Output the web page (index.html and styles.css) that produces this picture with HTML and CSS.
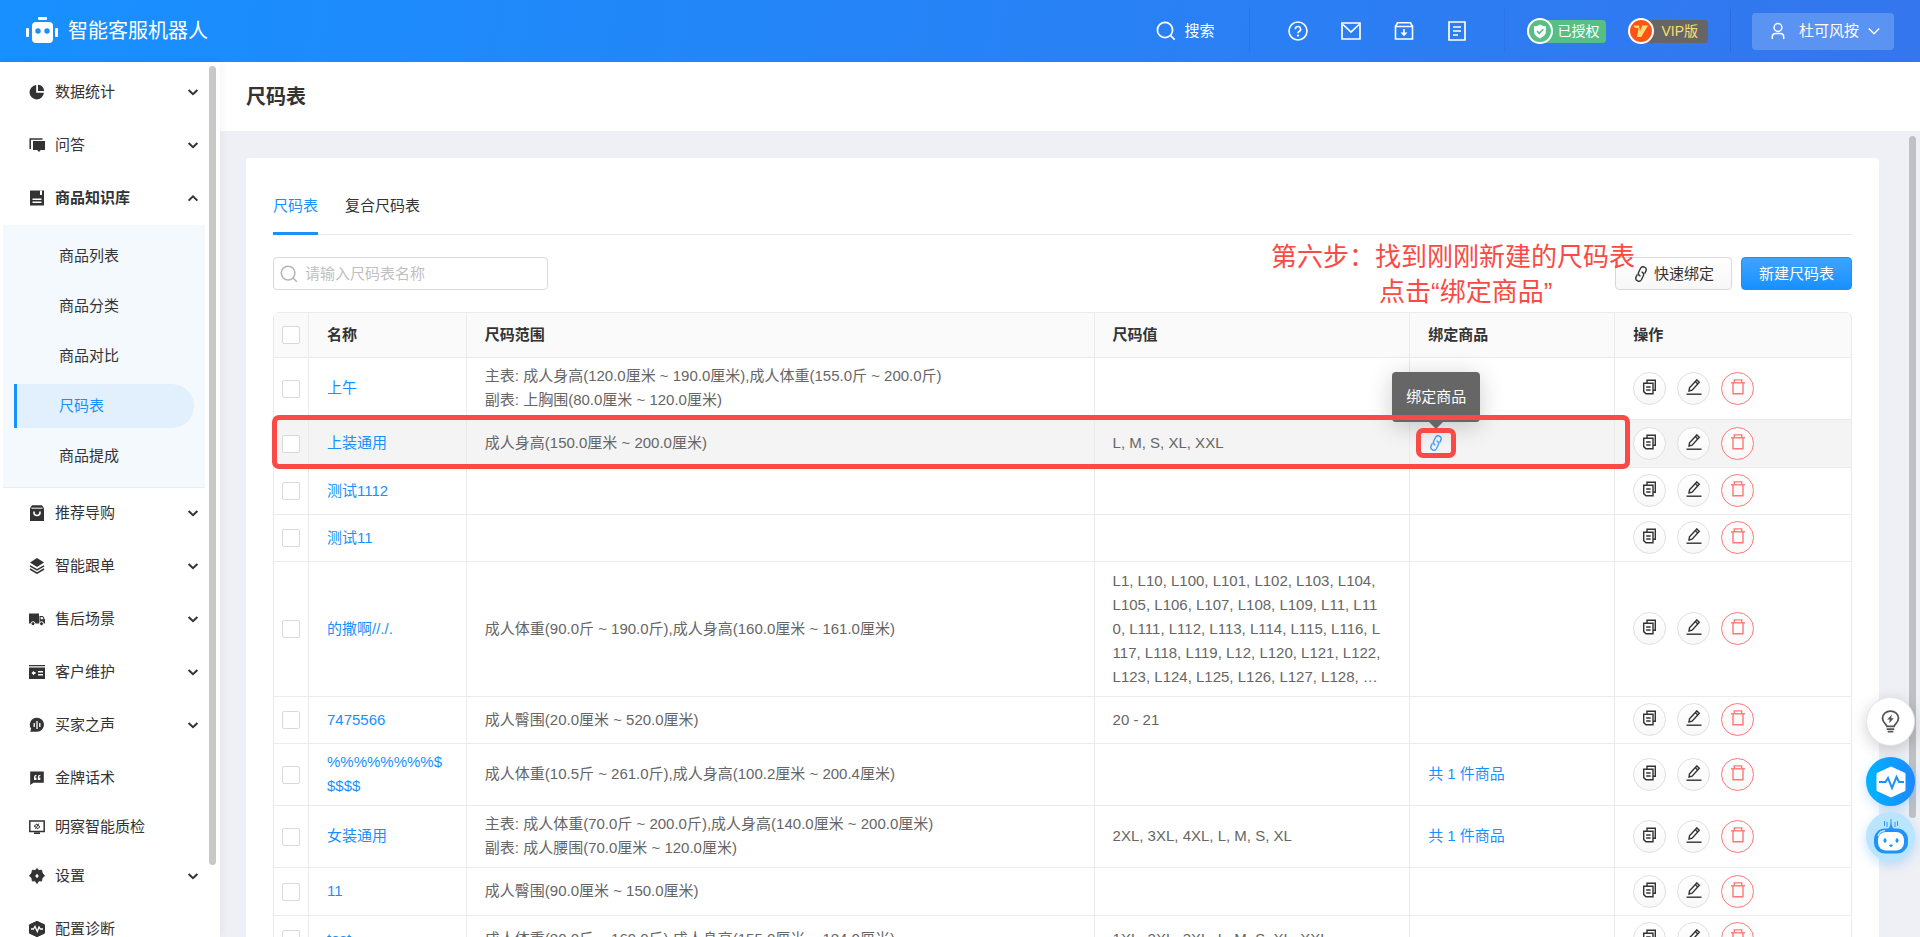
FILE: index.html
```html
<!DOCTYPE html>
<html lang="zh-CN">
<head>
<meta charset="utf-8">
<meta name="viewport" content="width=device-width, initial-scale=1">
<title>尺码表 - 智能客服机器人</title>
<link rel="stylesheet" href="styles.css">
</head>
<body>
<svg class="sprite" aria-hidden="true">
  <symbol id="i-down" viewBox="0 0 12 12"><path d="M1.6 4 6 8.2 10.4 4" fill="none" stroke="currentColor" stroke-width="2"/></symbol>
  <symbol id="i-up" viewBox="0 0 12 12"><path d="M1.6 8.6 6 4.400l4.400 4.200" fill="none" stroke="currentColor" stroke-width="2"/></symbol>
  <symbol id="i-search" viewBox="0 0 20 20"><g fill="none" stroke="currentColor" stroke-width="1.700"><circle cx="9" cy="9" r="7.600"/><path d="m14.500 14.500 4.200 4.200"/></g></symbol>
  <symbol id="i-link" viewBox="0 0 16 16"><g transform="rotate(-12 8 8)" fill="none" stroke="currentColor" stroke-width="1.400" stroke-linecap="round"><path d="M6.600 9.700a3 3 0 0 1-.4-4.100l2.600-3.300a3 3 0 0 1 4.700 3.700l-1.500 2"/><path d="M9.400 6.300a3 3 0 0 1 .4 4.100l-2.600 3.300a3 3 0 0 1-4.700-3.700l1.500-2"/></g></symbol>
  <symbol id="i-copy" viewBox="0 0 16 16"><g fill="none" stroke="currentColor" stroke-width="1.400"><path d="M5 4V1.200h8.300v10H11"/><path d="M1.700 4.200H11v10.600H4L1.700 12.600z"/><path d="M4.200 8h4.400M4.200 11h4.400"/></g></symbol>
  <symbol id="i-edit" viewBox="0 0 16 16"><g fill="none" stroke="currentColor" stroke-width="1.400"><path d="m3 12 .5-3.200L10.800.900l2.500 2.300-7.200 8z"/><path d="m9.300 2.600 2.500 2.300"/><path d="M.5 15.200h15"/></g></symbol>
  <symbol id="i-trash" viewBox="0 0 16 16"><g fill="none" stroke="currentColor" stroke-width="1.400"><path d="M1 3.800h14"/><path d="M4.300 3.800V.900h7.400v2.900"/><path d="M3 3.800v11h10v-11"/></g></symbol>
</svg>

<header class="topbar">
  <a class="brand" href="#">
    <svg class="brand-logo" viewBox="0 0 32 28" aria-hidden="true">
      <g fill="#fff"><rect x="12" y="0" width="9" height="3" rx="1"/><rect x="6" y="5" width="21" height="21" rx="4"/><rect x="0" y="11" width="3" height="9" rx="1"/><rect x="29" y="11" width="3" height="9" rx="1"/></g>
      <g fill="#1e8cfd"><circle cx="12" cy="14" r="2.700"/><circle cx="21" cy="14" r="2.700"/></g>
    </svg>
    <span>智能客服机器人</span>
  </a>
  <button class="top-search" type="button"><svg class="ic20"><use href="#i-search"/></svg>搜索</button>
  <nav class="top-icons" aria-label="快捷入口">
    <a href="#" aria-label="帮助"><svg viewBox="0 0 20 20" class="ic20"><g fill="none" stroke="#fff" stroke-width="1.600"><circle cx="10" cy="10" r="9"/><path d="M7.400 8.200a2.600 2.600 0 1 1 3.700 2.300c-.8.400-1.100.8-1.100 1.700"/></g><circle cx="10" cy="14.600" r="1.100" fill="#fff"/></svg></a>
    <a href="#" aria-label="消息"><svg viewBox="0 0 20 20" class="ic20"><g fill="none" stroke="#fff" stroke-width="1.700"><path d="M1 2h18v16H1z"/><path d="m2 3.500 8 7.500 8-7.500"/></g></svg></a>
    <a href="#" aria-label="下载"><svg viewBox="0 0 20 20" class="ic20"><g fill="none" stroke="#fff" stroke-width="1.600"><path d="M1.500 5.500h17V18h-17z"/><path d="m1.500 5.500 2-3.700h13l2 3.700"/><path d="M10 8v4"/></g><path d="M6.500 11.500h7L10 15.300z" fill="#fff"/></svg></a>
    <a href="#" aria-label="文档"><svg viewBox="0 0 20 20" class="ic20"><path d="M2 1h16v18H2zM6 6h8M6 10h8M6 14h5" fill="none" stroke="#fff" stroke-width="1.700"/></svg></a>
  </nav>
  <div class="badges">
    <span class="badge badge-auth">
      <svg viewBox="0 0 26 26" aria-hidden="true"><circle cx="13" cy="13" r="12" fill="#57bf85" stroke="#fff" stroke-width="2"/><path d="M13 6.500c2 1.400 4 1.800 6 1.800v5c0 3.500-2.500 5.500-6 7.200-3.500-1.700-6-3.700-6-7.200v-5c2 0 4-.4 6-1.800z" fill="#fff"/><path d="m10 13 2.300 2.400 4-4.200" fill="none" stroke="#57bf85" stroke-width="1.600"/></svg>
      已授权
    </span>
    <span class="badge badge-vip">
      <svg viewBox="0 0 26 26" aria-hidden="true"><circle cx="13" cy="13" r="12" fill="#ff5416" stroke="#fff" stroke-width="2"/><path d="M5.500 7.500H11L12 13l2.200-5.500H20L13.200 19H9L10.600 10H7z" fill="#ffdc73"/></svg>
      VIP版
    </span>
  </div>
  <div class="account">
    <button type="button" class="user-btn">
      <svg viewBox="0 0 16 18" class="user-ic"><g fill="none" stroke="currentColor" stroke-width="1.500"><circle cx="8" cy="5.500" r="3.900"/><path d="M2.300 17v-2a3.500 3.500 0 0 1 3.500-3.400h4.400a3.500 3.500 0 0 1 3.500 3.400v2"/></g></svg>
      杜可风按
      <svg viewBox="0 0 12 12" class="ic12"><path d="M.8 3.500 6 8.700l5.200-5.200" fill="none" stroke="currentColor" stroke-width="1.500"/></svg>
    </button>
  </div>
</header>

<div class="body">
  <aside class="sidebar">
    <nav class="menu" aria-label="主菜单">
      <button type="button" class="menu-item group"><svg viewBox="0 0 16 16" class="ic16"><path d="M7.200 1.100A7.200 7.200 0 1 0 14.900 8.800H7.200z" fill="currentColor"/><path d="M9 .8v6.200h6.200A7 7 0 0 0 9 .8z" fill="currentColor"/></svg><span>数据统计</span><svg class="ic12"><use href="#i-down"/></svg></button>
      <button type="button" class="menu-item group"><svg viewBox="0 0 16 16" class="ic16"><path d="M1.200 12V2h12.300" fill="none" stroke="currentColor" stroke-width="1.500"/><path d="M4 4h12v9h-4.200L10 15l-1.800-2H4z" fill="currentColor"/></svg><span>问答</span><svg class="ic12"><use href="#i-down"/></svg></button>
      <button type="button" class="menu-item group open" aria-expanded="true"><svg viewBox="0 0 16 16" class="ic16"><path d="M1 .500h14v15H1z" fill="currentColor"/><path d="M11 .500h2V5h-2zM3.500 8.500h9V10h-9zM3.500 11.500h9V13h-9z" fill="#fff"/></svg><span>商品知识库</span><svg class="ic12"><use href="#i-up"/></svg></button>
      <div class="submenu">
        <a href="#">商品列表</a>
        <a href="#">商品分类</a>
        <a href="#">商品对比</a>
        <a href="#" class="active" aria-current="page">尺码表</a>
        <a href="#">商品提成</a>
      </div>
      <button type="button" class="menu-item group"><svg viewBox="0 0 16 16" class="ic16"><path d="M3 .300h10l2 3V16H1V3.300z" fill="currentColor"/><path d="M2.500 3.200h11" stroke="#fff"/><path d="M5 6.500v1a3 3 0 0 0 6 0v-1" fill="none" stroke="#fff" stroke-width="1.600"/></svg><span>推荐导购</span><svg class="ic12"><use href="#i-down"/></svg></button>
      <button type="button" class="menu-item group"><svg viewBox="0 0 16 16" class="ic16"><path d="M8 0 1 4.500 8 9l7-4.500z" fill="currentColor"/><path d="m1 7.800 7 4.200 7-4.200M1 11l7 4.200 7-4.200" fill="none" stroke="currentColor" stroke-width="1.500"/></svg><span>智能跟单</span><svg class="ic12"><use href="#i-down"/></svg></button>
      <button type="button" class="menu-item group"><svg viewBox="0 0 16 16" class="ic16"><path d="M0 2.500h10v10H0zM10.500 5H14l2 3.500v4h-5.500z" fill="currentColor"/><path d="M11.700 6h1.700l1.200 2.200h-2.900z" fill="#fff"/><g fill="currentColor" stroke="#fff"><circle cx="4" cy="12.700" r="2"/><circle cx="12.500" cy="12.700" r="2"/></g></svg><span>售后场景</span><svg class="ic12"><use href="#i-down"/></svg></button>
      <button type="button" class="menu-item group"><svg viewBox="0 0 16 16" class="ic16"><path d="M0 1h16v1.200H0zM0 3.500h16V15H0z" fill="currentColor"/><path d="M2.500 9 5 6.800V8h1.500v2H5v1.500zM9 7h5v1.500H9zM9 10h5v1.500H9z" fill="#fff"/></svg><span>客户维护</span><svg class="ic12"><use href="#i-down"/></svg></button>
      <button type="button" class="menu-item group"><svg viewBox="0 0 16 16" class="ic16"><path d="M8 .800a6.900 6.900 0 1 1 0 14H1.200l1-3A6.900 6.900 0 0 1 8 .8z" fill="currentColor"/><path d="M5.200 6v4M8 4v8M10.800 6v4" stroke="#fff" stroke-width="1.300"/></svg><span>买家之声</span><svg class="ic12"><use href="#i-down"/></svg></button>
      <a href="#" class="menu-item"><svg viewBox="0 0 16 16" class="ic16"><path d="M1.200 1.500h13.600v11.300H4.500L1.200 15z" fill="currentColor"/><path d="M7.500 4.800C5.800 5 5 6 5 7.500V10h2.500V7.500H6.200c0-1 .4-1.400 1.300-1.600zM11.300 4.800c-1.700.2-2.500 1.200-2.500 2.700V10h2.500V7.500H10c0-1 .4-1.400 1.300-1.600z" fill="#fff"/></svg><span>金牌话术</span></a>
      <a href="#" class="menu-item"><svg viewBox="0 0 16 16" class="ic16"><path d="M.800 2h14.400v10.500H.8zM5 14.300h6" fill="none" stroke="currentColor" stroke-width="1.500"/><path d="M8 5 5 7.200 8.200 8.800M8 10l3-2.200-3.200-2.600M9.800 4.600 6.500 10" fill="none" stroke="currentColor" stroke-width="1"/></svg><span>明察智能质检</span></a>
      <button type="button" class="menu-item group"><svg viewBox="0 0 16 16" class="ic16"><path d="M6.200 2.600 8 .500l1.800 2.100 2.800-.400.500 2.800L15.500 8l-2.400 1.800-.5 3.200-2.800-.3L8 15.500l-1.800-2.800-2.800.3-.5-3.200L.5 8l2.400-3 .5-2.800z" fill="currentColor" stroke="currentColor" stroke-linejoin="round"/><path d="M8 5.800 9.800 8 8 10.200 6.200 8z" fill="#fff"/></svg><span>设置</span><svg class="ic12"><use href="#i-down"/></svg></button>
      <a href="#" class="menu-item"><svg viewBox="0 0 16 16" class="ic16"><path d="m8 .300 7.500 3.500v8.400L8 15.700.5 12.200V3.800z" fill="currentColor" stroke="currentColor" stroke-width="1" stroke-linejoin="round"/><path d="M2 8h2.500L6 5.500l2.300 5L10 6l1.300 2H14" fill="none" stroke="#fff" stroke-width="1.300"/></svg><span>配置诊断</span></a>
    </nav>
    <div class="thumb side-thumb"></div>
  </aside>

  <main class="main">
    <div class="page-head"><h1>尺码表</h1></div>
    <section class="card">
      <div class="tabs" role="tablist">
        <button type="button" role="tab" aria-selected="true" class="tab on">尺码表</button>
        <button type="button" role="tab" aria-selected="false" class="tab">复合尺码表</button>
      </div>
      <div class="toolbar">
        <label class="search"><svg class="ic18"><use href="#i-search"/></svg><input type="text" placeholder="请输入尺码表名称" aria-label="尺码表名称"></label>
        <div class="actions">
          <button type="button" class="btn"><svg class="ic16"><use href="#i-link"/></svg>快速绑定</button>
          <button type="button" class="btn primary">新建尺码表</button>
        </div>
        <p class="note">第六步：找到刚刚新建的尺码表<span>点击“绑定商品”</span></p>
      </div>

      <table class="grid">
        <colgroup><col class="c1"><col class="c2"><col class="c3"><col class="c4"><col class="c5"><col class="c6"></colgroup>
        <thead>
          <tr><th class="ck"><input type="checkbox" aria-label="全选"></th><th>名称</th><th>尺码范围</th><th>尺码值</th><th>绑定商品</th><th>操作</th></tr>
        </thead>
        <tbody>
          <tr><td class="ck"><input type="checkbox" aria-label="选择 上午"></td><td><a href="#">上午</a></td><td>主表: 成人身高(120.0厘米 ~ 190.0厘米),成人体重(155.0斤 ~ 200.0斤)<br>副表: 上胸围(80.0厘米 ~ 120.0厘米)</td><td></td><td></td><td><div class="ops"><button type="button" aria-label="复制"><svg class="ic16"><use href="#i-copy"/></svg></button><button type="button" aria-label="编辑"><svg class="ic16"><use href="#i-edit"/></svg></button><button type="button" class="del" aria-label="删除"><svg class="ic16"><use href="#i-trash"/></svg></button></div></td></tr>
          <tr class="tall hover"><td class="ck"><input type="checkbox" aria-label="选择 上装通用"></td><td><a href="#">上装通用</a></td><td>成人身高(150.0厘米 ~ 200.0厘米)</td><td>L, M, S, XL, XXL</td><td><div class="bind"><button type="button" class="bind-btn" aria-label="绑定商品"><svg class="ic16"><use href="#i-link"/></svg></button><span class="tip" role="tooltip">绑定商品</span><span class="bind-frame"></span></div></td><td><div class="ops"><button type="button" aria-label="复制"><svg class="ic16"><use href="#i-copy"/></svg></button><button type="button" aria-label="编辑"><svg class="ic16"><use href="#i-edit"/></svg></button><button type="button" class="del" aria-label="删除"><svg class="ic16"><use href="#i-trash"/></svg></button></div><span class="row-frame"></span></td></tr>
          <tr><td class="ck"><input type="checkbox" aria-label="选择 测试1112"></td><td><a href="#">测试1112</a></td><td></td><td></td><td></td><td><div class="ops"><button type="button" aria-label="复制"><svg class="ic16"><use href="#i-copy"/></svg></button><button type="button" aria-label="编辑"><svg class="ic16"><use href="#i-edit"/></svg></button><button type="button" class="del" aria-label="删除"><svg class="ic16"><use href="#i-trash"/></svg></button></div></td></tr>
          <tr><td class="ck"><input type="checkbox" aria-label="选择 测试11"></td><td><a href="#">测试11</a></td><td></td><td></td><td></td><td><div class="ops"><button type="button" aria-label="复制"><svg class="ic16"><use href="#i-copy"/></svg></button><button type="button" aria-label="编辑"><svg class="ic16"><use href="#i-edit"/></svg></button><button type="button" class="del" aria-label="删除"><svg class="ic16"><use href="#i-trash"/></svg></button></div></td></tr>
          <tr class="tallest"><td class="ck"><input type="checkbox" aria-label="选择 的撒啊//./."></td><td><a href="#">的撒啊//./.</a></td><td>成人体重(90.0斤 ~ 190.0斤),成人身高(160.0厘米 ~ 161.0厘米)</td><td>L1, L10, L100, L101, L102, L103, L104,<br>L105, L106, L107, L108, L109, L11, L11<br>0, L111, L112, L113, L114, L115, L116, L<br>117, L118, L119, L12, L120, L121, L122,<br>L123, L124, L125, L126, L127, L128, …</td><td></td><td><div class="ops"><button type="button" aria-label="复制"><svg class="ic16"><use href="#i-copy"/></svg></button><button type="button" aria-label="编辑"><svg class="ic16"><use href="#i-edit"/></svg></button><button type="button" class="del" aria-label="删除"><svg class="ic16"><use href="#i-trash"/></svg></button></div></td></tr>
          <tr><td class="ck"><input type="checkbox" aria-label="选择 7475566"></td><td><a href="#">7475566</a></td><td>成人臀围(20.0厘米 ~ 520.0厘米)</td><td>20 - 21</td><td></td><td><div class="ops"><button type="button" aria-label="复制"><svg class="ic16"><use href="#i-copy"/></svg></button><button type="button" aria-label="编辑"><svg class="ic16"><use href="#i-edit"/></svg></button><button type="button" class="del" aria-label="删除"><svg class="ic16"><use href="#i-trash"/></svg></button></div></td></tr>
          <tr><td class="ck"><input type="checkbox" aria-label="选择 %%%%%%%%$$$$$"></td><td><a href="#">%%%%%%%%$<br>$$$$</a></td><td>成人体重(10.5斤 ~ 261.0斤),成人身高(100.2厘米 ~ 200.4厘米)</td><td></td><td><a href="#">共 1 件商品</a></td><td><div class="ops"><button type="button" aria-label="复制"><svg class="ic16"><use href="#i-copy"/></svg></button><button type="button" aria-label="编辑"><svg class="ic16"><use href="#i-edit"/></svg></button><button type="button" class="del" aria-label="删除"><svg class="ic16"><use href="#i-trash"/></svg></button></div></td></tr>
          <tr><td class="ck"><input type="checkbox" aria-label="选择 女装通用"></td><td><a href="#">女装通用</a></td><td>主表: 成人体重(70.0斤 ~ 200.0斤),成人身高(140.0厘米 ~ 200.0厘米)<br>副表: 成人腰围(70.0厘米 ~ 120.0厘米)</td><td>2XL, 3XL, 4XL, L, M, S, XL</td><td><a href="#">共 1 件商品</a></td><td><div class="ops"><button type="button" aria-label="复制"><svg class="ic16"><use href="#i-copy"/></svg></button><button type="button" aria-label="编辑"><svg class="ic16"><use href="#i-edit"/></svg></button><button type="button" class="del" aria-label="删除"><svg class="ic16"><use href="#i-trash"/></svg></button></div></td></tr>
          <tr class="tall"><td class="ck"><input type="checkbox" aria-label="选择 11"></td><td><a href="#">11</a></td><td>成人臀围(90.0厘米 ~ 150.0厘米)</td><td></td><td></td><td><div class="ops"><button type="button" aria-label="复制"><svg class="ic16"><use href="#i-copy"/></svg></button><button type="button" aria-label="编辑"><svg class="ic16"><use href="#i-edit"/></svg></button><button type="button" class="del" aria-label="删除"><svg class="ic16"><use href="#i-trash"/></svg></button></div></td></tr>
          <tr><td class="ck"><input type="checkbox" aria-label="选择 test"></td><td><a href="#">test</a></td><td>成人体重(80.0斤 ~ 169.0斤),成人身高(155.0厘米 ~ 184.0厘米)</td><td>1XL, 2XL, 3XL, L, M, S, XL, XXL</td><td></td><td><div class="ops"><button type="button" aria-label="复制"><svg class="ic16"><use href="#i-copy"/></svg></button><button type="button" aria-label="编辑"><svg class="ic16"><use href="#i-edit"/></svg></button><button type="button" class="del" aria-label="删除"><svg class="ic16"><use href="#i-trash"/></svg></button></div></td></tr>
        </tbody>
      </table>
    </section>
    <div class="thumb main-thumb"></div>
  </main>
</div>

<div class="floats">
  <button type="button" class="fl fl-idea" aria-label="建议"><svg viewBox="0 0 20 24"><g fill="none" stroke="#555" stroke-width="1.900"><path d="M6.200 17.200c0-2.500-4.600-3.500-4.600-8.500a8.400 7.700 0 0 1 16.800 0c0 5-4.600 6-4.600 8.500z"/><path d="M6 20h8M7 22.600h6"/></g><path d="m11.500 4.500-5 5.300h2.800l-.8 4 5-5.300h-2.800z" fill="#555"/></svg></button>
  <button type="button" class="fl fl-diag" aria-label="诊断"><svg viewBox="0 0 32 32"><path d="m16 2 13 6v16l-13 6-13-6V8z" fill="#fff" stroke="#fff" stroke-width="3" stroke-linejoin="round"/><path d="M4 16h6.500l2.500-4 4 10 4.500-11 2.500 5h5" fill="none" stroke="#1a93ff" stroke-width="2"/></svg></button>
  <button type="button" class="fl fl-bot" aria-label="机器人"><svg viewBox="0 0 36 36"><path d="M18 0v9M14 3v5M22 3v5M11.500 2v5M24.500 2v5" stroke="#2b96f5" stroke-width="1"/><path d="M18 3c.5 3 1.500 5.500 3 7h-6c1.500-1.500 2.500-4 3-7z" fill="#2b96f5"/><rect x="1" y="9.500" width="34" height="25" rx="11" fill="#1f93fb"/><rect x="5" y="13" width="26" height="18.500" rx="8" fill="#fff"/><path d="M5 17c1-3 3-5 7-5.500" stroke="#c9e6ff" stroke-width="1.500" fill="none"/><g fill="#1f93fb"><ellipse cx="12" cy="21.500" rx="1.500" ry="2.200"/><ellipse cx="24" cy="21.500" rx="1.500" ry="2.200"/></g><path d="M16.500 26h3L18 27.800z" fill="#1f93fb" stroke="#1f93fb"/></svg></button>
</div>
</body>
</html>
```

FILE: styles.css
```css
* { box-sizing: border-box; }

body {
  margin: 0;
  height: 100vh;
  display: flex;
  flex-direction: column;
  overflow: hidden;
  font: 15px/24px "Liberation Sans", "Noto Sans CJK SC", sans-serif;
  color: #333;
  background: #eff0f5;
}

button, input { font: inherit; color: inherit; }
button { border: 0; padding: 0; background: none; cursor: pointer; }
a { color: #1890ff; text-decoration: none; }
svg { display: block; flex: none; }

.sprite { position: absolute; width: 0; height: 0; }
.ic12 { width: 12px; height: 12px; }
.ic16 { width: 16px; height: 16px; }
.ic18 { width: 18px; height: 18px; }
.ic20 { width: 20px; height: 20px; }

/* top bar */
.topbar {
  flex: none;
  display: flex;
  align-items: center;
  height: 62px;
  padding: 0 26px;
  color: #fff;
  background: linear-gradient(100deg, #1890ff, #3476ee);
}
.brand {
  display: flex;
  align-items: center;
  gap: 10px;
  margin-right: auto;
  color: #fff;
  font-size: 20px;
}
.brand-logo { width: 32px; height: 28px; }
.top-search { display: flex; align-items: center; gap: 8px; height: 44px; padding-right: 35px; }
.top-icons {
  display: flex;
  gap: 33px;
  align-items: center;
  height: 44px;
  padding: 0 37px 0 38px;
  border: solid #2c74ea;
  border-width: 0 1px;
}
.badges { display: flex; gap: 22px; height: 44px; align-items: center; padding: 0 22px; border-right: 1px solid #2c6ce2; }
.badge {
  display: flex;
  align-items: center;
  gap: 4px;
  height: 23px;
  padding-right: 7px;
  border-radius: 12px 4px 4px 12px;
  font-size: 14px;
}
.badge svg { width: 26px; height: 26px; }
.badge-auth { background: #57bf85; }
.badge-vip { background: #666; color: #ffdc73; padding-right: 10px; gap: 7px; }
.account { padding-left: 21px; }
.user-btn {
  display: flex;
  align-items: center;
  justify-content: center;
  gap: 9px;
  width: 142px;
  height: 37px;
  border-radius: 4px;
  color: #fff;
  background: #5b93f2;
}
.user-ic { width: 16px; height: 18px; margin: 0 4px; }

.body { flex: 1; display: flex; min-height: 0; }

/* sidebar */
.sidebar {
  position: relative;
  z-index: 1;
  flex: none;
  width: 220px;
  overflow: hidden;
  background: #fff;
  box-shadow: 1px 0 8px rgba(0, 0, 0, 0.06);
}
.menu { display: flex; flex-direction: column; padding: 5px 15px 0 3px; }
.menu-item {
  display: flex;
  flex: none;
  align-items: center;
  gap: 10px;
  height: 49px;
  padding: 0 6px 0 26px;
  color: #333;
  text-align: left;
}
.menu-item span { flex: 1; }
.menu-item.group { height: 50px; margin-bottom: 3px; }
.menu-item.open { font-weight: bold; margin-bottom: 2px; }
.submenu {
  display: flex;
  flex-direction: column;
  gap: 6px;
  padding: 9px 11px 9px;
  background: #f4f9fd;
  border-bottom: 1px solid #e6eef8;
}
.submenu a {
  height: 44px;
  padding-left: 42px;
  border-left: 3px solid transparent;
  border-radius: 0 22px 22px 0;
  line-height: 44px;
  color: #333;
}
.submenu .active { color: #1890ff; background: #e2f0fe; border-left-color: #1890ff; }

.thumb { position: absolute; width: 7px; border-radius: 4px; background: #c8c8c8; }
.side-thumb { top: 4px; left: 209px; height: 799px; }
.main-thumb { top: 74px; right: 4px; height: 682px; background: #bfc1c5; }

/* page */
.main { position: relative; flex: 1; min-width: 0; overflow: hidden; }
.page-head { display: flex; align-items: center; height: 69px; padding: 0 26px; background: #fff; }
h1 { margin: 0; font-size: 20px; line-height: 28px; }
.card { margin: 27px 41px 0 26px; padding: 21px 27px 0; border-radius: 4px; background: #fff; }

.tabs { display: flex; gap: 27px; height: 56px; border-bottom: 1px solid #ebebeb; }
.tab { height: 56px; padding-bottom: 2px; }
.tab.on { color: #1890ff; border-bottom: 3px solid #1890ff; padding: 1px 0 0; }

.toolbar { position: relative; display: flex; justify-content: space-between; padding: 22px 0; }
.search {
  display: flex;
  align-items: center;
  gap: 5px;
  width: 275px;
  height: 33px;
  padding: 0 6px;
  border: 1px solid #d9d9d9;
  border-radius: 4px;
  color: #b5b5b5;
}
.search input { flex: 1; min-width: 0; border: 0; outline: 0; padding: 0 2px; background: none; color: #333; }
.search input::placeholder { color: #bfbfbf; }
.actions { display: flex; gap: 9px; }
.btn {
  display: flex;
  align-items: center;
  gap: 5px;
  height: 33px;
  padding: 0 17px;
  border: 1px solid #d9d9d9;
  border-radius: 4px;
  background: linear-gradient(#fff, #f7f7f7);
}
.btn.primary { color: #fff; border-color: #1890ff; background: linear-gradient(#3ea4ff, #1890ff); }

.note {
  position: absolute;
  top: 5px;
  right: 217px;
  margin: 0;
  font-size: 26px;
  line-height: 35px;
  color: #fa4a45;
  white-space: nowrap;
}
.note span { display: block; padding-left: 108px; }

/* table */
.grid {
  width: 100%;
  table-layout: fixed;
  border-collapse: separate;
  border-spacing: 0;
  border: solid #ebebeb;
  border-width: 1px 0 0 1px;
  border-radius: 6px 6px 0 0;
  color: #666;
}
.c1 { width: 35px; }
.c2 { width: 10%; }
.c4 { width: 20%; }
.c5 { width: 13%; }
.c6 { width: 15%; }
th, td { border: solid #ebebeb; border-width: 0 1px 1px 0; text-align: left; vertical-align: middle; }
th { height: 45px; padding: 0 18px; color: #333; background: #fafafa; }
th:last-child { border-top-right-radius: 6px; }
td { padding: 6px 18px 7px; }
.tall td { height: 48px; }
.tallest td { height: 135px; }
.grid .ck { padding: 0 8px; line-height: 0; }
.hover { position: relative; }
.hover td { background: #f4f4f4; }

input[type="checkbox"] {
  appearance: none;
  width: 18px;
  height: 18px;
  margin: 0;
  border: 1px solid #d9d9d9;
  border-radius: 2px;
  background: #fff;
}

.ops { display: flex; gap: 11px; }
.ops button {
  display: flex;
  justify-content: center;
  width: 33px;
  height: 33px;
  padding-top: 6px;
  border: 1px solid #e0e0e0;
  border-radius: 50%;
  color: #333;
  background: linear-gradient(#fff, #f8f8f8);
}
.ops .del { color: #ff7875; border-color: #ff7875; }

.bind { position: relative; width: 16px; }
.bind-btn { display: block; color: #40a0ff; }
.tip {
  position: absolute;
  z-index: 2;
  left: 50%;
  bottom: 29px;
  transform: translateX(-50%);
  padding: 13px 14px;
  border-radius: 4px;
  color: #fff;
  background: #666;
  box-shadow: 0 4px 24px rgba(0, 0, 0, 0.2);
  white-space: nowrap;
}
.tip::after {
  content: "";
  position: absolute;
  top: 100%;
  left: 50%;
  margin-left: -7px;
  border: 7px solid transparent;
  border-top-color: #666;
}
.bind-frame {
  position: absolute;
  z-index: 3;
  inset: -7px -12px;
  border: 5px solid #fa4a45;
  border-radius: 7px;
  pointer-events: none;
}
.row-frame {
  position: absolute;
  z-index: 3;
  inset: -5px 222px -1px -2px;
  border: 5px solid #fa4a45;
  border-radius: 7px;
  pointer-events: none;
}

/* floating helpers */
.floats { position: fixed; right: 5px; bottom: 76px; z-index: 5; display: flex; flex-direction: column; gap: 6px; }
.fl {
  display: flex;
  align-items: center;
  justify-content: center;
  width: 49px;
  height: 49px;
  border-radius: 50%;
}
.fl-idea { margin-bottom: 5px; background: #fff; border: 1px solid #e4e4e4; box-shadow: 0 4px 16px rgba(0, 0, 0, 0.18); }
.fl-idea svg { width: 19px; height: 23px; }
.fl-diag { background: linear-gradient(90deg, #00b4ff, #1e88ff); box-shadow: 0 4px 12px rgba(24, 144, 255, 0.25); }
.fl-diag svg { width: 32px; height: 32px; }
.fl-bot { background: #bae5ff; box-shadow: 0 4px 12px rgba(24, 144, 255, 0.25); }
.fl-bot svg { width: 36px; height: 36px; }
```
